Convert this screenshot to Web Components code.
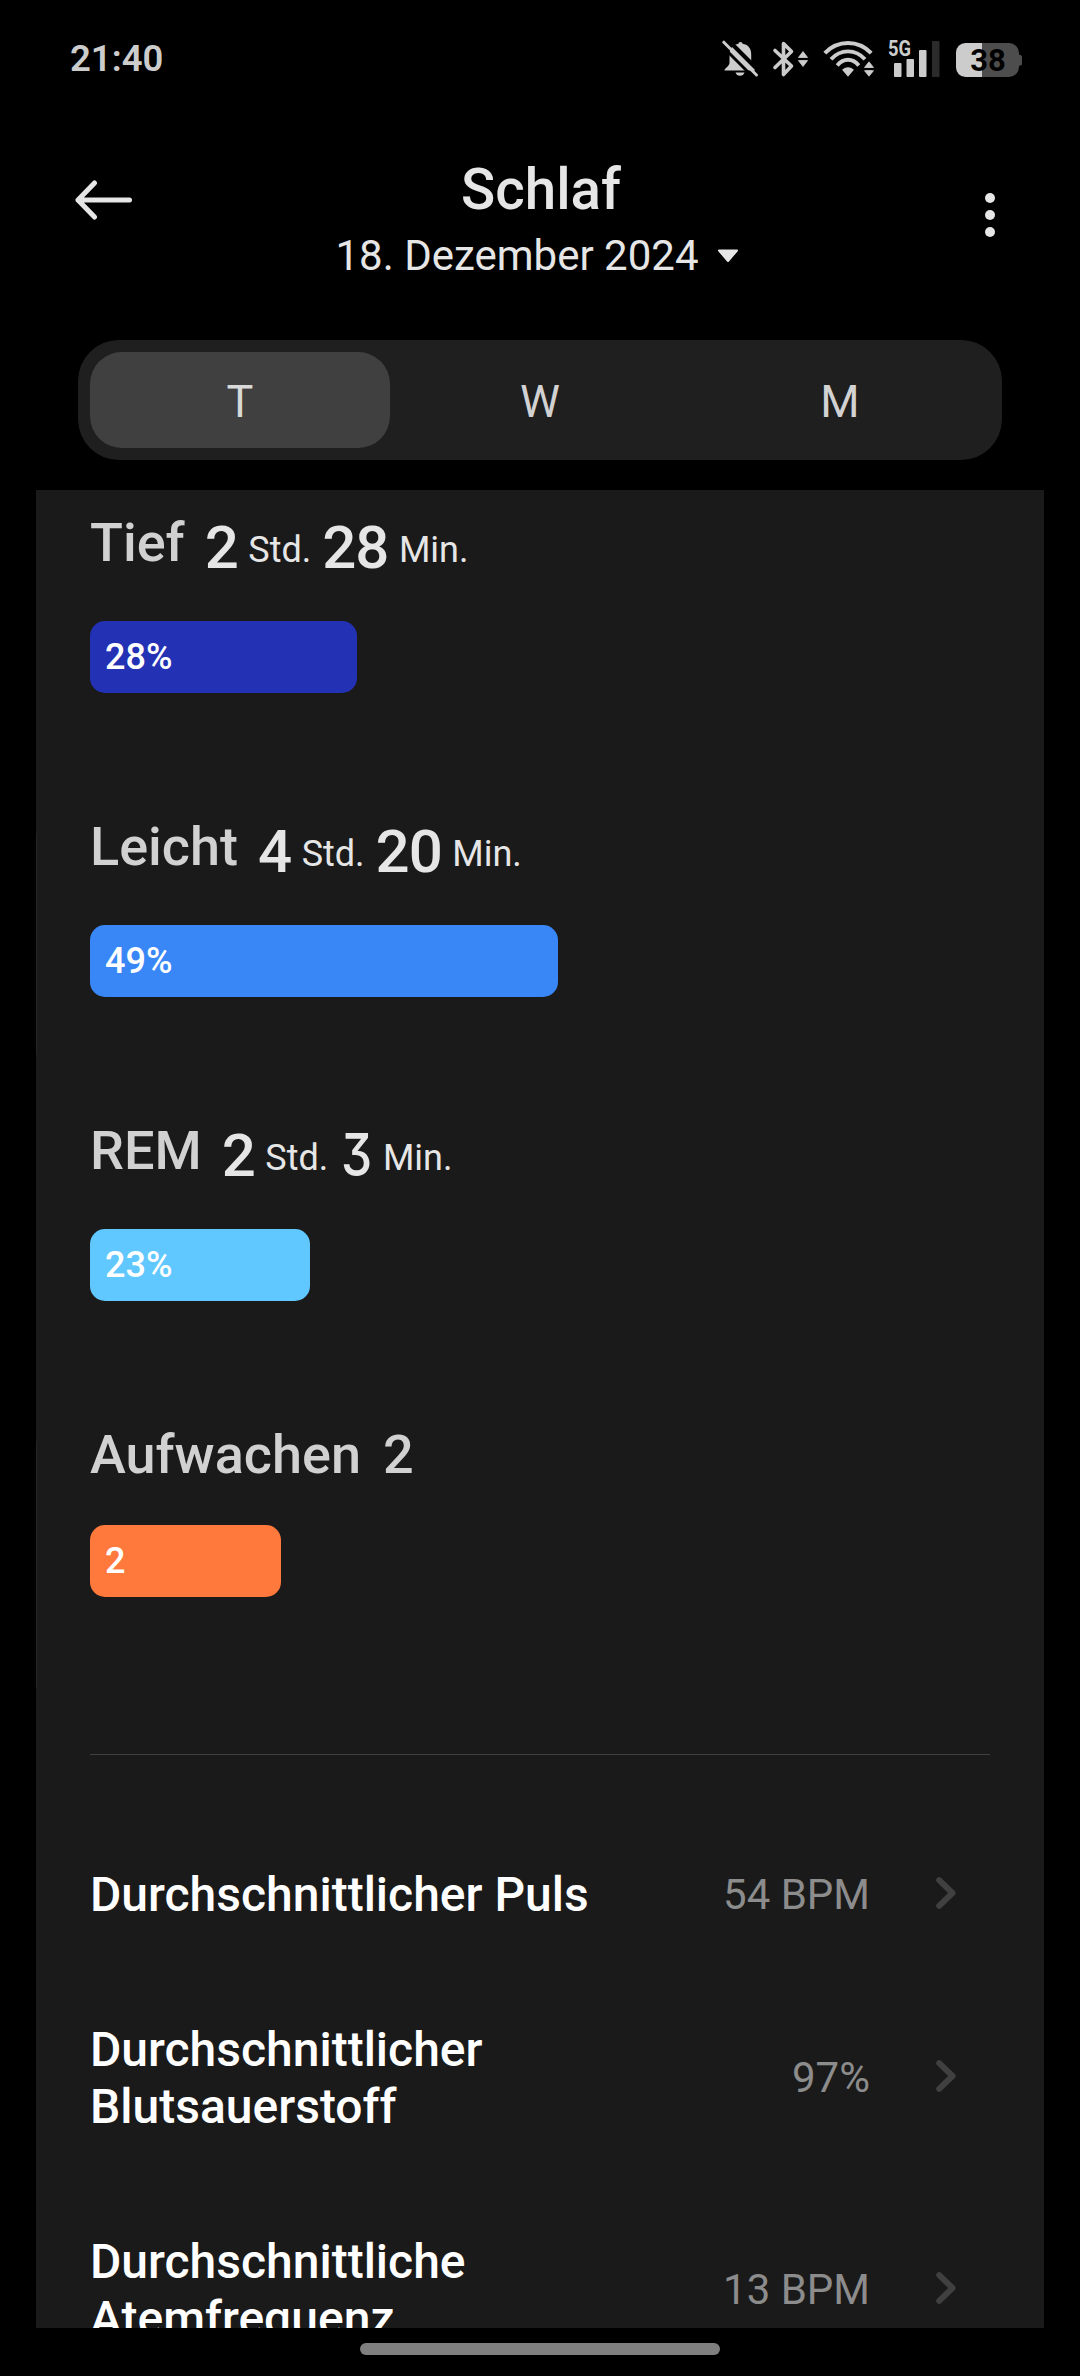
<!DOCTYPE html>
<html lang="de">
<head>
<meta charset="utf-8">
<title>Schlaf</title>
<style>
  body {
    margin: 0;
    width: 1080px;
    height: 2376px;
    overflow: hidden;
    background: #000;
    font-family: Roboto, "Noto Sans", sans-serif;
  }
</style>
</head>
<body>
<sleep-app>
  <status-bar time="21:40" battery="38"></status-bar>
  <page-header date="18. Dezember 2024">Schlaf</page-header>
  <range-tabs>
    <range-tab active>T</range-tab>
    <range-tab>W</range-tab>
    <range-tab>M</range-tab>
  </range-tabs>
  <sleep-card>
    <sleep-stage label="Tief" hours="2" minutes="28" value="28%" style="--bar: #2331b5; --bar-width: 267px"></sleep-stage>
    <sleep-stage label="Leicht" hours="4" minutes="20" value="49%" style="--bar: #3987f7; --bar-width: 467.5px"></sleep-stage>
    <sleep-stage label="REM" hours="2" minutes="3" value="23%" style="--bar: #60c7ff; --bar-width: 219.5px"></sleep-stage>
    <sleep-stage label="Aufwachen" count="2" value="2" style="--bar: #ff783c; --bar-width: 191px"></sleep-stage>
    <card-divider></card-divider>
    <metric-row value="54 BPM">Durchschnittlicher Puls</metric-row>
    <metric-row value="97%">Durchschnittlicher Blutsauerstoff</metric-row>
    <metric-row value="13 BPM">Durchschnittliche Atemfrequenz</metric-row>
  </sleep-card>
  <home-bar></home-bar>
</sleep-app>

<script>
class SleepApp extends HTMLElement {
  constructor() {
    super();
    this.attachShadow({mode: 'open'}).innerHTML = `
    <style>
      :host {
        display: flex;
        flex-direction: column;
        width: 1080px;
        height: 2376px;
      }
    </style>
    <slot></slot>
    `;
  }
}

class StatusBar extends HTMLElement {
  connectedCallback() {
    this.attachShadow({mode: 'open'}).innerHTML = `
    <style>
      :host {
        display: flex;
        justify-content: space-between;
        height: 78px;
        padding: 40px 58px 0 70px;
        box-sizing: border-box;
        color: #ccc;
        flex: none;
      }
      .time {
        font-size: 36.500px;
        font-weight: 600;
        line-height: 38px;
      }
      .icons {
        display: flex;
      }
      svg {
        display: block;
        height: 38px;
        fill: #ccc;
        overflow: visible;
      }
      svg + svg { margin-left: 13px; }
      svg.signal { margin-left: 12px; }
      svg.battery { margin-left: 16px; }
      text { font-family: Roboto, sans-serif; font-weight: 700; }
    </style>
    <span class="time">${this.getAttribute('time')}</span>
    <div class="icons">
      <svg width="37" height="38" viewBox="0 0 37 38">
        <path d="M18.500 2c1.200 0 2 .8 2 1.800C26 4.400 29.200 8.500 29.200 14v8.500c0 3.500 4 5.500 4 8H2.500c0-2.500 5-4 5-8V14C7.500 8.500 11.500 4.500 16.500 3.800 16.500 2.800 17.300 2 18.500 2z"/>
        <path d="M13.500 32.500h9c-.5 2-2.300 3.300-4.500 3.300s-4-1.300-4.500-3.300z"/>
        <path d="M4.500 -1.500L38 32" stroke="#000" stroke-width="4"/>
        <path d="M-1 5L32 38" stroke="#000" stroke-width="3"/>
        <path d="M1.800 2.200L34.500 35" stroke="#ccc" stroke-width="3" stroke-linecap="round"/>
      </svg>
      <svg width="37" height="38" viewBox="0 0 37 38">
        <path d="M3 10.500L19.500 26 11.500 34.500V3.500L19.500 11.500 3 27.500" fill="none" stroke="#ccc" stroke-width="3.600" stroke-linecap="round" stroke-linejoin="round"/>
        <path d="M31 11.500l4.600 6h-9.200zM31 26.500l4.600-6h-9.200z" stroke="#ccc" stroke-width=".8" stroke-linejoin="round"/>
      </svg>
      <svg width="54" height="38" viewBox="0 0 54 38">
        <g fill="none" stroke="#ccc" stroke-width="3.900">
          <path d="M2.800 13.200C9 6.600 16.500 3 26 3s17 3.600 23.200 10.200"/>
          <path d="M9 19.300C13.500 14.300 19 11.400 26 11.400s12.500 2.900 17 7.900"/>
          <path d="M15.200 25.400c3-3.500 6.300-5.600 10.800-5.600s7.800 2.100 10.800 5.600"/>
        </g>
        <path d="M26 27.200c2.200 0 4.200.8 5.900 2.600L26 36.700l-5.900-6.900c1.700-1.800 3.700-2.600 5.900-2.600z"/>
        <path d="M47 21.500l5 7h-10zM47 36.500l5-7h-10z" stroke="#000" stroke-width="2"/>
        <path d="M47 21.800l4.500 5.700h-9zM47 36.200l4.500-5.500h-9z" stroke="#ccc" stroke-width=".8" stroke-linejoin="round"/>
      </svg>
      <svg class="signal" width="52" height="38" viewBox="0 0 52 38">
        <text x="0" y="16" font-size="22" textLength="23" lengthAdjust="spacingAndGlyphs">5G</text>
        <rect x="6" y="23" width="7.500" height="14" rx="1"/>
        <rect x="18.500" y="19" width="7.500" height="18" rx="1"/>
        <rect x="31" y="10" width="7.500" height="27" rx="1"/>
        <rect x="44" y="1" width="7.500" height="36" rx="1" fill="#2b2b2b"/>
      </svg>
      <svg class="battery" width="66" height="38" viewBox="0 0 66 38">
        <path d="M26 3h27a10 10 0 0 1 10 10v1.500l2 .8q1 .5 1 1.500v7q0 1-1 1.500l-2 .8V27a10 10 0 0 1-10 10H26z" fill="#4d4d4d"/>
        <path d="M26 3H9.500A9.500 9.500 0 0 0 0 12.500v15A9.500 9.500 0 0 0 9.500 37H26z"/>
        <text x="32" y="31" font-size="31" fill="#000" text-anchor="middle">${this.getAttribute('battery')}</text>
      </svg>
    </div>
    `;
  }
}

class PageHeader extends HTMLElement {
  connectedCallback() {
    this.attachShadow({mode: 'open'}).innerHTML = `
    <style>
      :host {
        display: grid;
        grid-template-columns: 75px 57px 1fr 10px 85px;
        height: 262px;
        flex: none;
        color: #e6e6e6;
      }
      svg { display: block; fill: #e6e6e6; }
      .back { grid-column: 2; margin-top: 102px; }
      .middle {
        display: flex;
        flex-direction: column;
        align-items: center;
        padding-top: 79px;
        padding-right: 35px;
      }
      h1 {
        margin: 0;
        font-size: 56.500px;
        font-weight: 500;
        line-height: 66px;
      }
      .date {
        display: flex;
        align-items: center;
        gap: 18px;
        font-size: 42px;
        line-height: 50px;
        margin-top: 8px;
        margin-right: 8px;
      }
      .more { grid-column: 4; margin-top: 115px; }
    </style>
    <svg class="back" width="57" height="40" viewBox="0 0 57 40">
      <path d="M19.500 3L3 20l16.500 17M3 20h51.500" fill="none" stroke="#e6e6e6" stroke-width="5" stroke-linecap="round" stroke-linejoin="round"/>
    </svg>
    <div class="middle">
      <h1><slot></slot></h1>
      <div class="date">
        <span>${this.getAttribute('date')}</span>
        <svg width="22" height="14" viewBox="0 0 22 14">
          <path d="M2 1.500h18L11 12z" stroke="#e6e6e6" stroke-width="2" stroke-linejoin="round"/>
        </svg>
      </div>
    </div>
    <svg class="more" width="10" height="44" viewBox="0 0 10 44">
      <circle cx="5" cy="5" r="5"/><circle cx="5" cy="22" r="5"/><circle cx="5" cy="39" r="5"/>
    </svg>
    `;
  }
}

class RangeTabs extends HTMLElement {
  constructor() {
    super();
    this.attachShadow({mode: 'open'}).innerHTML = `
    <style>
      :host {
        display: grid;
        grid-template-columns: repeat(3, 1fr);
        margin: 0 78px 30px;
        padding: 12px;
        height: 120px;
        flex: none;
        box-sizing: border-box;
        border-radius: 41px;
        background: #1f1f1f;
      }
    </style>
    <slot></slot>
    `;
  }
}

class RangeTab extends HTMLElement {
  constructor() {
    super();
    this.attachShadow({mode: 'open'}).innerHTML = `
    <style>
      :host {
        display: flex;
        align-items: center;
        justify-content: center;
        padding-top: 3px;
        border-radius: 32px;
        color: #d2d2d2;
        font-size: 45px;
        line-height: 52px;
      }
      :host([active]) {
        background: #404040;
        color: #d9d9d9;
      }
    </style>
    <slot></slot>
    `;
  }
}

class SleepCard extends HTMLElement {
  constructor() {
    super();
    this.attachShadow({mode: 'open'}).innerHTML = `
    <style>
      :host {
        display: block;
        height: 1838px;
        flex: none;
        box-sizing: border-box;
        margin: 0 36px;
        padding: 21px 54px 0;
        overflow: hidden;
        /* hairline segments down the left edge */
        background:
          linear-gradient(#262626, #262626) 0 343px / 1px 222px no-repeat,
          linear-gradient(#262626, #262626) 0 951px / 1px 247px no-repeat,
          #1a1a1a;
      }
    </style>
    <slot></slot>
    `;
  }
}

class SleepStage extends HTMLElement {
  connectedCallback() {
    const count = this.getAttribute('count');
    const detail = count
      ? `<span class="count">${count}</span>`
      : `<span class="num">${this.digits('hours')}</span><span class="unit">Std.</span>
         <span class="num next">${this.digits('minutes')}</span><span class="unit">Min.</span>`;

    this.attachShadow({mode: 'open'}).innerHTML = `
    <style>
      :host {
        display: block;
        height: 304px;
      }
      :host([count]) { height: 331px; }
      .title {
        display: flex;
        align-items: flex-start;
        height: 64px;
        line-height: 64px;
        color: #d1d1d1;
        font-size: 54px;
        font-weight: 500;
        white-space: nowrap;
      }
      .num {
        margin-left: 20px;
        padding-top: 4.500px;
        color: #e6e6e6;
        font-size: 60px;
        font-weight: 500;
        letter-spacing: -1px;
      }
      .num.next { margin-left: 11px; }
      .flat {
        display: inline-block;
        font-family: Inter, Roboto, sans-serif;
        font-size: 59px;
        font-feature-settings: "cv09";
        line-height: 60px;
        transform: scaleX(.84);
        margin: 0 -2px 0 -1px;
      }
      .unit {
        margin-left: 10.500px;
        padding-top: 7px;
        color: #e6e6e6;
        font-size: 36px;
        font-weight: 400;
      }
      .count { margin-left: 22px; }
      .bar {
        display: flex;
        align-items: center;
        width: var(--bar-width);
        height: 72px;
        margin-top: 46px;
        padding-left: 15px;
        box-sizing: border-box;
        border-radius: 15px;
        background: var(--bar);
        color: #fff;
        font-size: 36px;
        font-weight: 500;
      }
      :host([count]) .bar { margin-top: 38px; }
    </style>
    <div class="title"><span>${this.getAttribute('label')}</span>${detail}</div>
    <div class="bar">${this.getAttribute('value')}</div>
    `;
  }

  // the three has a flat top in the numeral face
  digits(name) {
    return this.getAttribute(name).replace('3', '<span class="flat">3</span>');
  }
}

class CardDivider extends HTMLElement {
  constructor() {
    super();
    this.attachShadow({mode: 'open'}).innerHTML = `
    <style>
      :host {
        display: block;
        height: 1px;
        background: #404040;
        margin-bottom: 62px;
      }
    </style>
    `;
  }
}

class MetricRow extends HTMLElement {
  connectedCallback() {
    this.attachShadow({mode: 'open'}).innerHTML = `
    <style>
      :host {
        display: flex;
        align-items: center;
        padding: 49px 34px 49px 0;
      }
      .label {
        width: 520px;
        color: #fff;
        font-size: 48px;
        font-weight: 500;
        line-height: 57px;
      }
      .value {
        margin-left: auto;
        color: #8c8c8c;
        font-size: 42px;
        line-height: 50px;
      }
      svg {
        display: block;
        margin: 0 0 4px 66px;
      }
    </style>
    <div class="label"><slot></slot></div>
    <div class="value">${this.getAttribute('value')}</div>
    <svg width="20" height="32" viewBox="0 0 20 32">
      <path d="M3.200 3.200L16.500 16 3.200 28.800" fill="none" stroke="#404040" stroke-width="6" stroke-linecap="round" stroke-linejoin="round"/>
    </svg>
    `;
  }
}

class HomeBar extends HTMLElement {
  constructor() {
    super();
    this.attachShadow({mode: 'open'}).innerHTML = `
    <style>
      :host {
        display: block;
        width: 360px;
        height: 12px;
        margin: 15px auto 0;
        border-radius: 6px;
        background: #808080;
      }
    </style>
    `;
  }
}

customElements.define('sleep-app', SleepApp);
customElements.define('status-bar', StatusBar);
customElements.define('page-header', PageHeader);
customElements.define('range-tabs', RangeTabs);
customElements.define('range-tab', RangeTab);
customElements.define('sleep-card', SleepCard);
customElements.define('sleep-stage', SleepStage);
customElements.define('card-divider', CardDivider);
customElements.define('metric-row', MetricRow);
customElements.define('home-bar', HomeBar);
</script>
</body>
</html>
